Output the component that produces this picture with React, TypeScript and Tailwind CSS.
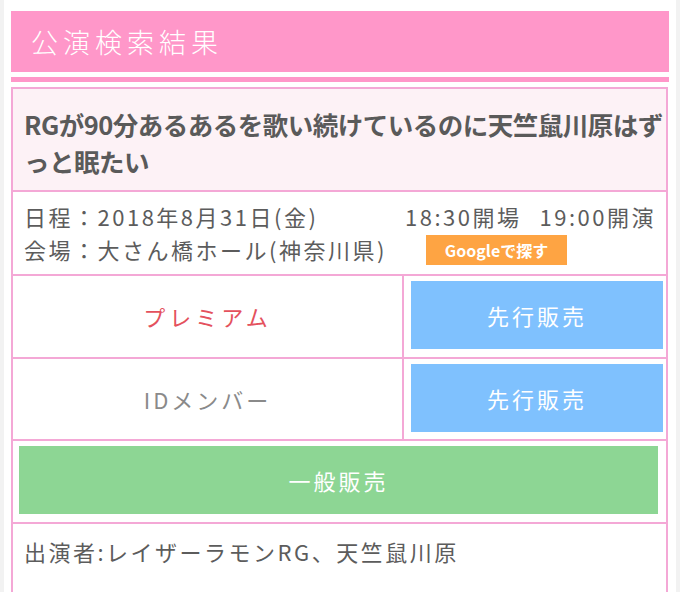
import React from "react";

const F = { fontFamily: '"Noto Sans CJK JP", "Noto Sans", sans-serif' };

export default function App() {
  return (
    <div className="w-[680px] h-[592px] overflow-hidden bg-[#f2f2f2] px-[4px]" style={F}>
      <div className="bg-white h-full px-[7px] pt-[11px]">
        <div className="h-[61px] bg-[#ff97c9] flex items-center pl-[20px]">
          <span className="text-white text-[27px] font-light tracking-[5px] leading-none">公演検索結果</span>
        </div>
        <div className="h-[5px] mt-[5px] bg-[#ff97c9]" />
        <div className="mt-[5px] border-2 border-[#f4a8d6] w-[657px]">
          <div className="bg-[#fdf2f6] border-b-2 border-[#f4a8d6] pl-[11px] pr-[2px] pt-[16px] pb-[11px]">
            <p className="text-[25.5px] font-bold leading-[37px] text-[#5a5a5a] tracking-[-0.5px]">
              RGが90分あるあるを歌い続けているのに天竺鼠川原はずっと眠たい
            </p>
          </div>
          <div className="border-b-2 border-[#f4a8d6] pl-[11px] pr-[10px] pt-[8px] pb-[8px] text-[22px] text-[#5c5c5c] leading-[33px] tracking-[2.5px]">
            <div className="flex">
              <span>日程：2018年8月31日(金)</span>
              <span className="ml-auto">18:30開場</span>
              <span className="ml-[18px]">19:00開演</span>
            </div>
            <div className="flex items-center">
              <span className="w-[402px] shrink-0 whitespace-nowrap">会場：大さん橋ホール(神奈川県)</span>
              <span className="w-[141px] h-[30px] bg-[#fea443] text-white text-[16px] font-bold flex items-center justify-center leading-none tracking-normal">
                Googleで探す
              </span>
            </div>
          </div>
          <div className="flex border-b-2 border-[#f4a8d6] h-[83px]">
            <div className="w-[391px] border-r-2 border-[#f4a8d6] flex items-center justify-center text-[22px] text-[#e4515d] tracking-[4px]">
              プレミアム
            </div>
            <div className="flex-1 pl-[7px] pr-[3px] pt-[5px]">
              <div className="h-[68px] bg-[#7fc1fe] flex items-center justify-center text-white text-[22px] tracking-[3px]">
                先行販売
              </div>
            </div>
          </div>
          <div className="flex border-b-2 border-[#f4a8d6] h-[82px]">
            <div className="w-[391px] border-r-2 border-[#f4a8d6] flex items-center justify-center text-[22px] text-[#8a8a8a] tracking-[3px]">
              IDメンバー
            </div>
            <div className="flex-1 pl-[7px] pr-[3px] pt-[5px]">
              <div className="h-[68px] bg-[#7fc1fe] flex items-center justify-center text-white text-[22px] tracking-[3px]">
                先行販売
              </div>
            </div>
          </div>
          <div className="border-b-2 border-[#f4a8d6] h-[83px] pl-[6px] pr-[8px] pt-[5px]">
            <div className="h-[68px] bg-[#8dd694] flex items-center justify-center text-white text-[22px] tracking-[3px]">
              一般販売
            </div>
          </div>
          <div className="pl-[11px] pt-[11px] h-[80px] text-[22px] text-[#5c5c5c] leading-[33px] tracking-[2.5px]">
            出演者:レイザーラモンRG、天竺鼠川原
          </div>
        </div>
      </div>
    </div>
  );
}
